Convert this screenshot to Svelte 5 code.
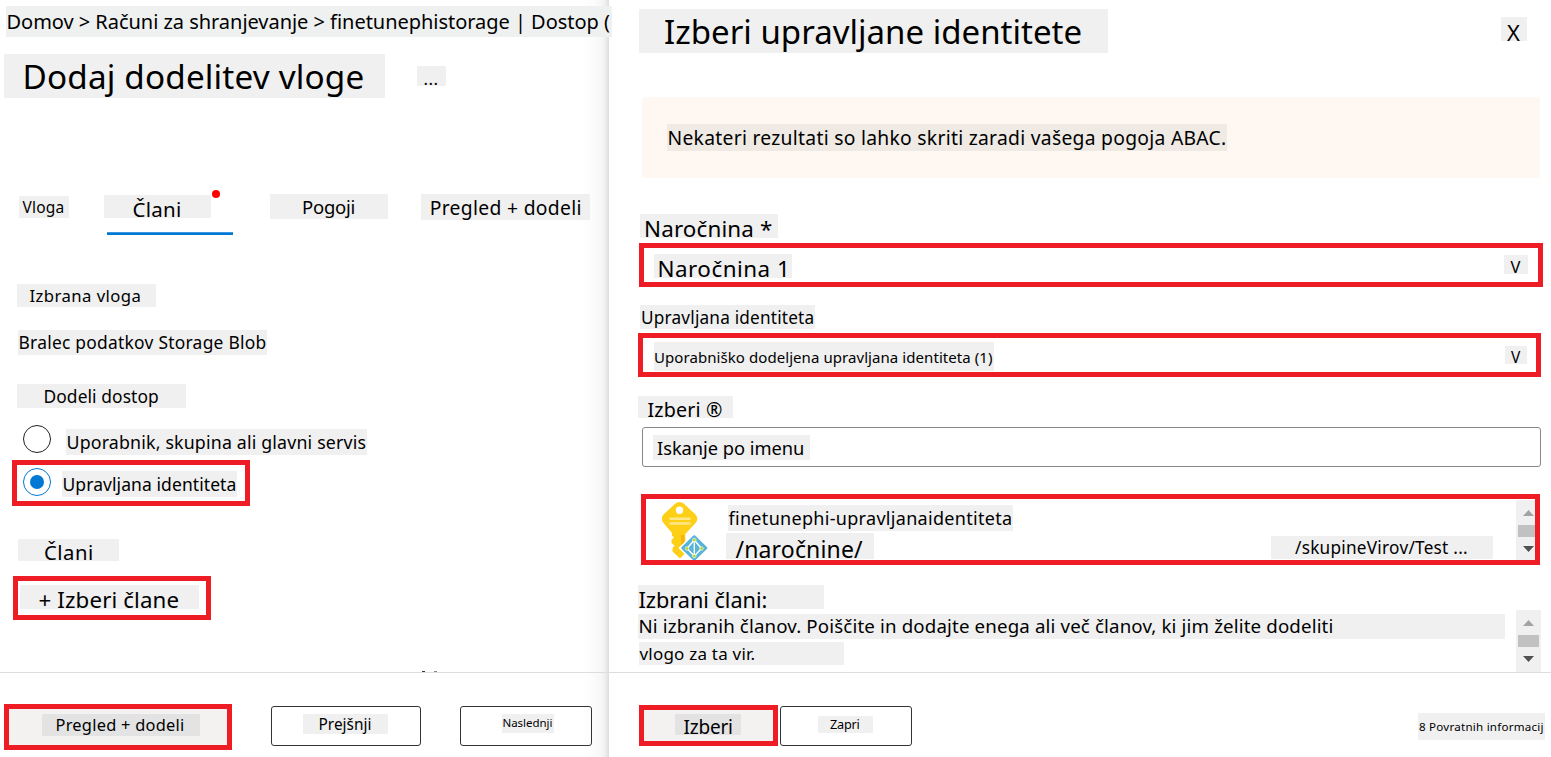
<script>
  const family = '"Noto Sans", sans-serif';
  const ctx = document.createElement('canvas').getContext('2d');

  // Spaces the letters so that the visible text starts at `x` and is `len` wide inside its label,
  // and sets the line height that puts the baseline on a whole pixel, `base` below the label's top.
  function textStyle({ text, x, len, base, size }) {
    ctx.font = `${size}px ${family}`;
    const m = ctx.measureText(text);
    const ink = m.actualBoundingBoxLeft + m.actualBoundingBoxRight;
    const n = text.length - 1;
    const spacing = n > 0 ? (len - ink) / n : 0;
    const indent = x + m.actualBoundingBoxLeft;
    const ascent = Math.round(1.069 * size);
    const descent = Math.round(0.293 * size);
    const line = 2 * Math.round(base) - ascent + descent;
    return `font-size:${size}px;letter-spacing:${spacing.toFixed(3)}px;margin-left:${indent.toFixed(2)}px;line-height:${line}px`;
  }

  const label = (text, left, top, w, h, x, len, base, size) => ({ text, left, top, w, h, x, len, base, size });

  const crumb = label('Domov > Računi za shranjevanje > finetunephistorage | Dostop (', 6, 6, 606, 31, 1.5, 602.5, 23, 20);
  const heading = label('Dodaj dodelitev vloge', 4, 0, 381, 44, 21.5, 338, 35, 33.3);
  const more = label('...', 32, 12, 29, 20, 7.5, 13, 19, 17);
  const tabs = [
    label('Vloga', 19, 2, 50, 22, 3.5, 41, 17, 15.5),
    label('Člani', 35, 1, 107, 23, 29.5, 46.5, 22, 20.5),
    label('Pogoji', 59, 0, 118, 25, 33, 51.5, 20, 18.5),
    label('Pregled + dodeli', 33, 0, 169, 26, 9.7, 149.8, 21, 19.3)
  ];
  const role = [
    label('Izbrana vloga', 17, 0, 139, 23, 12.5, 111, 17.5, 16.7),
    label('Bralec podatkov Storage Blob', 18, 23, 249, 25, 1.5, 246, 19, 17.4),
    label('Dodeli dostop', 17, 29, 169, 24, 27.5, 113.5, 19, 17.4)
  ];
  const optionUser = label('Uporabnik, skupina ali glavni servis', 15, 4, 301, 26, 1.5, 298, 20, 17.8);
  const optionManaged = label('Upravljana identiteta', 11, 3, 175, 26, 1.5, 172, 20, 17.5);
  const members = label('Člani', 18, 33, 101, 22, 27, 47, 21, 20.3);
  const pick = label('+ Izberi člane', 2, 4, 179, 24, 19.5, 139, 23, 22.3);
  const review = label('Pregled + dodeli', 33, 5, 158, 22, 14.5, 126.5, 17, 16.4);
  const previous = label('Prejšnji', 31, 7, 85, 20, 16.5, 51, 16, 15.4);
  const next = label('Naslednji', 41, 7, 52, 19, 1.5, 49, 13, 11.5);

  const panelTitle = label('Izberi upravljane identitete', 30, 9, 469, 44, 26, 415.5, 35, 33);
  const close = label('X', 393, 17, 26, 24, 6, 13, 24, 22);
  const notice = label('Nekateri rezultati so lahko skriti zaradi vašega pogoja ABAC.', 25, 27, 560, 27, 1.5, 556.5, 21, 19.3);
  const subLabel = label('Naročnina *', 31, 36, 138, 24, 6, 126, 23, 22.4);
  const subValue = label('Naročnina 1', 10, 6, 138, 24, 5.5, 125.5, 23, 22.4);
  const subArrow = label('V', 0, 7, 24, 19, 6.5, 10.5, 18, 16.5);
  const idLabel = label('Upravljana identiteta', 31, 18, 175, 24, 2, 171.5, 19, 17.2);
  const idValue = label('Uporabniško dodeljena upravljana identiteta (1)', 11, 4, 340, 29, 1, 337, 20.5, 15);
  const idArrow = label('V', 0, 8, 22, 18, 6, 9.5, 17, 15.5);
  const selLabel = label('Izberi ®', 29, 19, 95, 22, 9.5, 74.5, 21, 19.7);
  const search = label('Iskanje po imenu', 10, 7, 157, 25, 4, 146, 19.5, 18.3);
  const idName = label('finetunephi-upravljanaidentiteta', 2, 6, 285, 26, 0.5, 282.5, 20, 18);
  const idPath = label('/naročnine/', 0, 2, 148, 26, 9.5, 127.5, 25, 23);
  const idGroup = label('/skupineVirov/Test ...', 397, 5, 222, 23, 24, 172, 18, 17.2);
  const chosen = [
    label('Izbrani člani:', 0, 0, 186, 24, 0.5, 128, 23, 21.7),
    label('Ni izbranih članov. Poiščite in dodajte enega ali več članov, ki jim želite dodeliti', 0, 5, 867, 25, 1.5, 693, 19, 18.7),
    label('vlogo za ta vir.', 1, 3, 205, 23, 0.5, 115, 18, 17)
  ];
  const select = label('Izberi', 31, 4, 66, 21, 8.5, 48.5, 20, 19);
  const cancel = label('Zapri', 37, 9, 55, 17, 12, 29.5, 13, 12.7);
  const feedback = label('8 Povratnih informacij', 506, 8, 127, 27, 1, 124.5, 18, 11.6);
</script>

{#snippet tag(l, tone = '')}
  <span class="tag {tone}" style="width:{l.w}px;height:{l.h}px;margin:{l.top}px 0 0 {l.left}px"><span class="text" style={textStyle(l)}>{l.text}</span></span>
{/snippet}

{#snippet arrow(down)}
  <svg class="arrow" width="11" height="6" viewBox="0 0 11 6"><path d={down ? 'M0 0H11L5.5 6Z' : 'M0 6H11L5.5 0Z'} fill={down ? '#505050' : '#a3a3a3'} /></svg>
{/snippet}

<div class="page">
  <main class="assign">
    <nav class="crumbs">{@render tag(crumb, 'cool')}</nav>
    <header class="heading">{@render tag(heading)}{@render tag(more)}</header>
    <div class="tabs">
      {#each tabs as t, i}
        <div class="tab">
          {@render tag(t)}
          {#if i === 1}<i class="dot"></i><i class="underline"></i>{/if}
        </div>
      {/each}
    </div>
    <section class="role">
      {#each role as r}{@render tag(r)}{/each}
    </section>
    <div class="option"><i class="radio"></i>{@render tag(optionUser)}</div>
    <div class="option marked managed"><i class="radio on"></i>{@render tag(optionManaged)}</div>
    {@render tag(members)}
    <div class="marked pick">{@render tag(pick)}</div>
    <footer class="actions">
      <i class="clipped"></i>
      <button class="marked review">{@render tag(review, 'dark')}</button>
      <button class="outline previous">{@render tag(previous)}</button>
      <button class="outline next">{@render tag(next)}</button>
    </footer>
  </main>

  <aside class="panel">
    <header class="panel-head">{@render tag(panelTitle)}{@render tag(close)}</header>
    <div class="notice">{@render tag(notice, 'warm')}</div>
    {@render tag(subLabel)}
    <div class="marked field sub">{@render tag(subValue)}{@render tag(subArrow)}</div>
    {@render tag(idLabel)}
    <div class="marked field identity">{@render tag(idValue)}{@render tag(idArrow)}</div>
    {@render tag(selLabel)}
    <div class="search">{@render tag(search)}</div>
    <div class="marked result">
      <svg class="key" width="46" height="58" viewBox="0 0 46 58">
        <path d="M13 1.800Q17.500-1.800 22 1.800L33.800 12.800Q36.800 17 33.800 20.800L23.300 32V51L18 56.500L10.500 49.500V46L12.500 43.500L9.500 41V38L12 35.500L10 33.500V31L1.200 20.800Q-1.500 17 1.200 12.800Z" fill="#fdd017" />
        <circle cx="17.500" cy="8.200" r="3.700" fill="#fff" />
        <path d="M8.500 16.700H27.500M8.500 21.500H27.500" stroke="#fee788" stroke-width="2.600" stroke-linecap="round" />
        <path d="M19 33H22.500V42L19 46Z" fill="#f9b50c" />
        <path d="M32.300 30.500L48 46L32.300 61.500L16.500 46Z" fill="#fff" />
        <path d="M32.300 34.500L44 46L32.300 57.500L20.600 46Z" fill="#59b4d9" stroke="#59b4d9" stroke-width="2.500" stroke-linejoin="round" />
        <path d="M32.300 38L25 46.500L32.300 54L39.500 46.500ZM32.300 38V54" fill="none" stroke="#fff" stroke-width="1.400" />
        <g fill="#b8d432" stroke="#fff" stroke-width=".6"><circle cx="32.300" cy="38" r="1.800" /><circle cx="25" cy="46.500" r="1.800" /><circle cx="39.500" cy="46.500" r="1.800" /><circle cx="32.300" cy="54" r="1.800" /></g>
      </svg>
      <div class="details">
        {@render tag(idName)}
        <div class="path">{@render tag(idPath)}{@render tag(idGroup)}</div>
      </div>
      <div class="scroll">{@render arrow(false)}<i class="thumb"></i>{@render arrow(true)}</div>
    </div>
    <section class="chosen">
      <div class="chosen-text">{#each chosen as c}{@render tag(c)}{/each}</div>
      <div class="scroll tall">{@render arrow(false)}<i class="thumb"></i>{@render arrow(true)}</div>
    </section>
    <footer class="panel-actions">
      <button class="marked select">{@render tag(select, 'dark')}</button>
      <button class="outline cancel">{@render tag(cancel)}</button>
      {@render tag(feedback)}
    </footer>
  </aside>
</div>

<style>
  :global(body) { margin: 0; background: #fff; overflow: hidden; }
  * { box-sizing: border-box; }
  .page { display: flex; width: 1551px; height: 757px; overflow: hidden; background: #fff; color: #000; font-family: "Noto Sans", sans-serif; }
  .tag { display: block; flex: none; background: #f0f0f0; text-align: left; white-space: pre; }
  .tag.cool { background: #eff1f1; }
  .tag.warm { background: #efeae4; }
  .tag.dark { background: #e3e3e3; }
  .text { display: block; width: max-content; font-kerning: normal; }
  button { display: flex; align-items: flex-start; margin: 0; padding: 0; font-family: inherit; color: #000; background: #fff; flex: none; }
  .marked { border: 5px solid #ee1c24; }
  .outline { border: 1px solid #333; border-radius: 3px; height: 40px; background: transparent; }

  .assign { display: flex; flex-direction: column; align-items: flex-start; flex: none; width: 609px; height: 757px; background: linear-gradient(to right, #fff 580px, #fcfcfc 593px, #f6f6f6 602px, #ececec 606px, #dcdcdc 609px); }
  .crumbs { position: relative; z-index: 1; height: 54px; display: flex; }
  .heading { display: flex; align-items: flex-start; height: 140px; }
  .tabs { display: flex; align-items: flex-start; height: 90px; }
  .tab { position: relative; display: flex; }
  .dot { position: absolute; left: 143px; top: -4px; width: 8px; height: 8px; border-radius: 50%; background: #f00; }
  .underline { position: absolute; left: 38px; top: 38px; width: 126px; height: 3px; background: #0078d4; border-top: 1px solid #3a96dd; }
  .role { display: flex; flex-direction: column; }
  .option { display: flex; align-items: flex-start; margin: 17px 0 0 23px; height: 35px; }
  .radio { flex: none; display: grid; place-items: center; width: 28px; height: 28px; border: 1px solid #222; border-radius: 50%; background: #fff; }
  .radio.on { border-color: #0078d4; }
  .radio.on::after { content: ''; width: 14px; height: 14px; border-radius: 50%; background: #0078d4; }
  .option.managed { margin: 0 0 0 12px; width: 238px; height: 46px; padding: 3px 0 0 6px; }
  .pick { display: flex; width: 198px; height: 44px; margin: 15px 0 0 13px; }
  .actions { position: relative; display: flex; align-items: flex-start; width: 609px; margin-top: 52px; padding-top: 31px; border-top: 1px solid #ddd; }
  .clipped { position: absolute; left: 422px; top: -2px; width: 15px; height: 1px; background: linear-gradient(to right, #333 3px, transparent 3px, transparent 12px, #888 12px); }
  .review { width: 228px; height: 46px; margin-left: 4px; background: #f3f2f1; }
  .previous { width: 150px; margin: 2px 0 0 39px; }
  .next { width: 132px; margin: 2px 0 0 39px; }

  .panel { display: flex; flex-direction: column; align-items: flex-start; flex: none; width: 942px; height: 757px; background: #fff; }
  .panel-head { display: flex; align-items: flex-start; height: 97px; }
  .notice { display: flex; width: 898px; height: 81px; margin-left: 33px; border-radius: 3px; background: #fff7f1; }
  .field { display: flex; align-items: flex-start; justify-content: space-between; height: 44px; }
  .sub { width: 904px; margin: 5px 0 0 30px; padding-right: 10px; }
  .identity { width: 903px; margin: 4px 0 0 29px; padding-right: 9px; }
  .search { display: flex; width: 899px; height: 40px; margin: 9px 0 0 33px; border: 1px solid #8a8886; border-radius: 3px; }
  .result { display: flex; width: 899px; height: 71px; margin: 27px 0 0 32px; overflow: hidden; }
  .key { flex: none; margin: 3px 0 0 16px; }
  .details { display: flex; flex-direction: column; width: 790px; margin-left: 18px; }
  .path { display: flex; align-items: flex-start; }
  .scroll { display: flex; flex-direction: column; align-items: center; flex: none; width: 25px; height: 62px; margin-top: 1px; padding: 10px 0 0; background: #f0f0f0; }
  .result .scroll { margin-left: auto; margin-right: -6px; }
  .arrow { display: block; flex: none; }
  .thumb { flex: none; width: 21px; height: 12px; margin: 9px 0; background: #c1c1c1; }
  .chosen { display: flex; width: 932px; height: 87px; margin-top: 20px; padding-left: 29px; }
  .chosen-text { display: flex; flex-direction: column; width: 878px; }
  .scroll.tall { margin-top: 25px; }
  .panel-actions { display: flex; align-items: flex-start; width: 942px; padding: 32px 0 0 30px; border-top: 1px solid #ddd; }
  .select { width: 139px; height: 41px; background: #f3f2f1; }
  .cancel { width: 132px; margin: 1px 0 0 2px; }
</style>
